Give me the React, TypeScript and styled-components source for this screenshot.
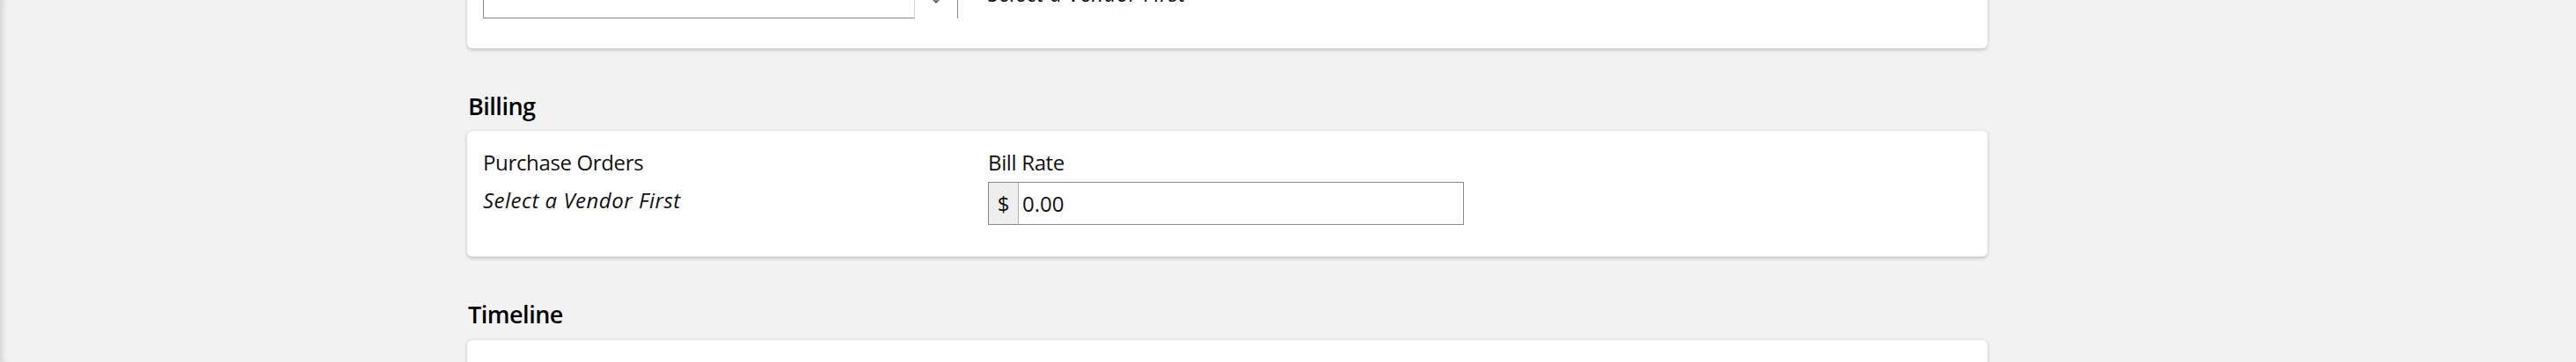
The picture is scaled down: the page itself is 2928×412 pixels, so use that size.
import styled, { createGlobalStyle } from "styled-components";

const GlobalStyle = createGlobalStyle`
  html, body {
    margin: 0;
    padding: 0;
    overflow: hidden;
    background: #f2f2f2;
  }
  body {
    font-family: "Open Sans", "Liberation Sans", sans-serif;
    font-size: 24px;
    color: #111;
  }
`;

const Page = styled.div`
  height: 100vh;
  overflow: hidden;
  background: #f2f2f2;
  box-shadow: inset 9px 0 9px -7px rgba(0, 0, 0, 0.16);
  padding-left: 531px;
`;

const Content = styled.main`
  width: 1728px;
  display: flex;
  flex-direction: column;
`;

// the first card is scrolled partly out of view
const Card = styled.section<{ $shift?: number; $minHeight?: number }>`
  background: #fff;
  border-radius: 6px;
  box-shadow: 0 1.5px 4.5px rgba(0, 0, 0, 0.2);
  padding: 18px;
  margin-top: ${(p) => (p.$shift ? `-${p.$shift}px` : "0")};
  min-height: ${(p) => (p.$minHeight ? `${p.$minHeight}px` : "auto")};
`;

const SectionTitle = styled.h2`
  margin: 50px 0 12px 1px;
  font-family: "Open Sans", "Liberation Sans", sans-serif;
  font-weight: 600;
  font-size: 27px;
  line-height: 1.2;
  letter-spacing: -0.5px;
  color: #000;
`;

const FieldGrid = styled.div`
  display: grid;
  grid-template-columns: repeat(3, 1fr);
  column-gap: 30px;
`;

const Field = styled.div<{ $tight?: boolean }>`
  display: flex;
  flex-direction: column;
  margin-bottom: ${(p) => (p.$tight ? "16px" : "18px")};
`;

const Label = styled.label`
  line-height: 36px;
  margin-bottom: 4px;
  letter-spacing: -0.35px;
`;

const Placeholder = styled.div`
  font-style: italic;
  line-height: 36px;
  padding-top: 3px;
  letter-spacing: 0.5px;
`;

const SelectBox = styled.div`
  display: flex;
  width: 540px;
  height: 49px;
`;

const SelectInput = styled.div`
  flex: 1;
  border: 1px solid #8a8a8a;
  border-right-color: #d4d4d4;
  background: #fff;
`;

const SelectArrow = styled.div`
  width: 48px;
  border-right: 1px solid #8a8a8a;
  display: flex;
  align-items: center;
  justify-content: center;
`;

const InputGroup = styled.div`
  display: flex;
  width: 541px;
  height: 49px;
  border: 1px solid #8a8a8a;
  box-sizing: border-box;
`;

const Addon = styled.span`
  width: 33px;
  display: flex;
  align-items: center;
  justify-content: center;
  background: #eeeeee;
  border-right: 1px solid #b0b0b0;
`;

const TextInput = styled.input`
  flex: 1;
  min-width: 0;
  border: none;
  outline: none;
  padding: 0 0 0 4px;
  font-family: "Open Sans", "Liberation Sans", sans-serif;
  font-size: 24px;
  color: #111;
  background: #fff;
`;

export default function App() {
  return (
    <>
      <GlobalStyle />
      <Page>
        <Content>
          <Card $shift={86}>
            <FieldGrid>
              <Field $tight>
                <Label>Vendor</Label>
                <SelectBox>
                  <SelectInput />
                  <SelectArrow>
                    <svg width="14" height="16" viewBox="0 0 14 16">
                      <path d="M7 2v12M3 10l4 4 4-4" stroke="#666" strokeWidth="1.5" fill="none" />
                    </svg>
                  </SelectArrow>
                </SelectBox>
              </Field>
              <Field $tight>
                <Label>Contact</Label>
                <Placeholder>Select a Vendor First</Placeholder>
              </Field>
            </FieldGrid>
          </Card>

          <SectionTitle>Billing</SectionTitle>
          <Card>
            <FieldGrid>
              <Field>
                <Label>Purchase Orders</Label>
                <Placeholder>Select a Vendor First</Placeholder>
              </Field>
              <Field>
                <Label>Bill Rate</Label>
                <InputGroup>
                  <Addon>$</Addon>
                  <TextInput defaultValue="0.00" />
                </InputGroup>
              </Field>
            </FieldGrid>
          </Card>

          <SectionTitle>Timeline</SectionTitle>
          <Card $minHeight={200} />
        </Content>
      </Page>
    </>
  );
}
